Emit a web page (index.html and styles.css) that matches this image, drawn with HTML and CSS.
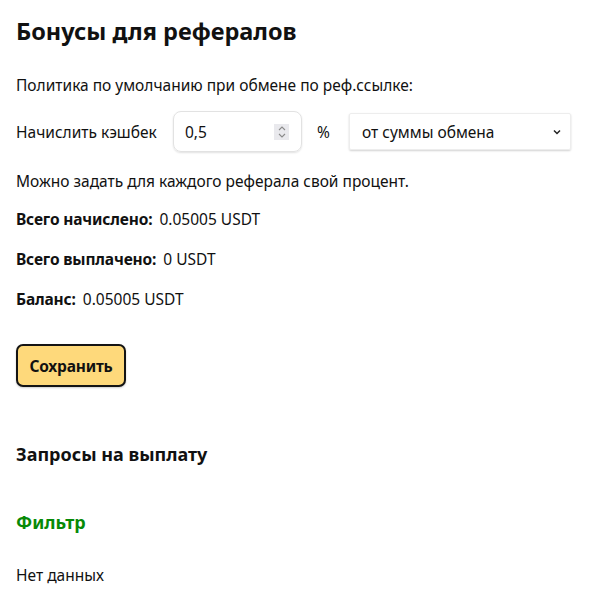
FILE: index.html
```html
<!DOCTYPE html>
<html lang="ru">
<head>
<meta charset="utf-8">
<link rel="stylesheet" href="styles.css">
</head>
<body>
<main class="page">
  <h1 class="title">Бонусы для рефералов</h1>
  <p class="text policy">Политика по умолчанию при обмене по реф.ссылке:</p>
  <div class="row">
    <span class="label">Начислить кэшбек</span>
    <div class="num">
      <input class="num-input" type="text" value="0,5">
      <span class="spin">
        <svg width="10" height="14" viewBox="0 0 10 14"><path d="M2 5 L5 2 L8 5 M2 9 L5 12 L8 9" fill="none" stroke="#8a8a8a" stroke-width="1.1"/></svg>
      </span>
    </div>
    <span class="pct">%</span>
    <div class="select">
      <span>от суммы обмена</span>
      <svg width="10" height="8" viewBox="0 0 10 8"><path d="M2 2.5 L5 5.5 L8 2.5" fill="none" stroke="#222" stroke-width="1.5"/></svg>
    </div>
  </div>
  <p class="text hint">Можно задать для каждого реферала свой процент.</p>
  <p class="text stat"><b>Всего начислено:</b> 0.05005 USDT</p>
  <p class="text stat"><b>Всего выплачено:</b> 0 USDT</p>
  <p class="text stat"><b>Баланс:</b> 0.05005 USDT</p>
  <button class="save">Сохранить</button>
  <h2 class="sub">Запросы на выплату</h2>
  <h3 class="filter">Фильтр</h3>
  <p class="text empty">Нет данных</p>
</main>
</body>
</html>
```
FILE: styles.css
```css
* { box-sizing: border-box; }
body {
  margin: 0;
  background: #fff;
  color: #111;
  font-family: "Noto Sans", "Open Sans", sans-serif;
  font-size: 15.5px;
}
.page {
  padding: 16px 16px 0 16px;
  display: flex;
  flex-direction: column;
  align-items: flex-start;
}
.title {
  margin: 0;
  font-size: 23.5px;
  font-weight: 700;
  line-height: 30px;
  height: 30px;
}
.text {
  margin: 0;
  line-height: 20px;
}
.policy { margin-top: 29px; }
.row {
  margin-top: 16px;
  display: flex;
  align-items: center;
  width: 100%;
}
.label { width: 157px; }
.num {
  width: 129px;
  height: 41px;
  border: 1px solid #e2e2e2;
  border-radius: 8px;
  box-shadow: 0 1px 2px rgba(0,0,0,0.12);
  display: flex;
  align-items: center;
  padding: 0 12px 0 11px;
}
.num-input {
  border: 0;
  outline: none;
  font: inherit;
  color: #111;
  width: 80px;
  padding: 0;
  background: transparent;
}
.spin {
  margin-left: auto;
  width: 15px;
  height: 16px;
  background: #e9e9ed;
  display: flex;
  align-items: center;
  justify-content: center;
}
.pct { margin-left: 15px; width: 32px; }
.select {
  width: 222px;
  height: 37px;
  border: 1px solid #ededed;
  border-radius: 2px;
  box-shadow: 0 1px 2px rgba(0,0,0,0.18);
  display: flex;
  align-items: center;
  justify-content: space-between;
  padding: 0 8px 0 12px;
}
.hint { margin-top: 19px; }
.stat { margin-top: 18px; }
.stat + .stat { margin-top: 20px; }
.stat b { font-weight: 700; font-size: 15.5px; letter-spacing: -0.15px; margin-right: 3px; }
.save {
  margin-top: 35px;
  height: 43px;
  width: 110px;
  background: #fed97b;
  border: 2px solid #141414;
  border-radius: 7px;
  font: inherit;
  font-size: 15.5px;
  font-weight: 700;
  letter-spacing: -0.2px;
  color: #111;
  box-shadow: 0 1px 2px rgba(0,0,0,0.2);
  padding: 0;
}
.sub {
  margin: 55px 0 0 0;
  font-size: 18px;
  font-weight: 700;
  line-height: 24px;
}
.filter {
  margin: 44px 0 0 0;
  font-size: 18px;
  font-weight: 700;
  color: #078a07;
  line-height: 24px;
}
.empty { margin-top: 31px; }
```
